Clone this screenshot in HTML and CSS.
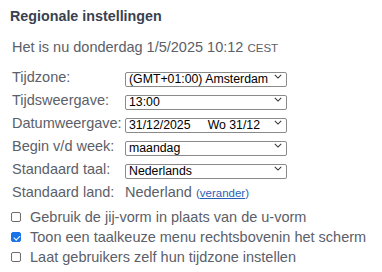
FILE: index.html
```html
<!DOCTYPE html>
<html lang="nl">

<head>
    <meta charset="UTF-8">
    <meta name="viewport" content="width=device-width, initial-scale=1.0">
    <title>Regionale instellingen</title>
    <link rel="stylesheet" href="styles.css">
</head>

<body>
    <div class="settings">
        <h2 class="title">Regionale instellingen</h2>
        <p class="now">Het is nu donderdag 1/5/2025 10:12 <span class="tz">CEST</span></p>

        <div class="row">
            <label class="label" for="timezone">Tijdzone:</label>
            <div class="selectWrap">
                <select id="timezone" class="select">
                    <option>(GMT+01:00) Amsterdam</option>
                </select>
                <svg class="chevron" viewBox="0 0 10 6"><path d="M1 1l4 4 4-4" /></svg>
            </div>
        </div>
        <div class="row">
            <label class="label" for="timeformat">Tijdsweergave:</label>
            <div class="selectWrap">
                <select id="timeformat" class="select">
                    <option>13:00</option>
                </select>
                <svg class="chevron" viewBox="0 0 10 6"><path d="M1 1l4 4 4-4" /></svg>
            </div>
        </div>
        <div class="row">
            <label class="label" for="dateformat">Datumweergave:</label>
            <div class="selectWrap">
                <select id="dateformat" class="select">
                    <option>31/12/2025&nbsp;&nbsp;&nbsp;&nbsp;&nbsp;Wo 31/12</option>
                </select>
                <svg class="chevron" viewBox="0 0 10 6"><path d="M1 1l4 4 4-4" /></svg>
            </div>
        </div>
        <div class="row">
            <label class="label" for="weekstart">Begin v/d week:</label>
            <div class="selectWrap">
                <select id="weekstart" class="select">
                    <option>maandag</option>
                </select>
                <svg class="chevron" viewBox="0 0 10 6"><path d="M1 1l4 4 4-4" /></svg>
            </div>
        </div>
        <div class="row">
            <label class="label" for="language">Standaard taal:</label>
            <div class="selectWrap">
                <select id="language" class="select">
                    <option>Nederlands</option>
                </select>
                <svg class="chevron" viewBox="0 0 10 6"><path d="M1 1l4 4 4-4" /></svg>
            </div>
        </div>
        <div class="row">
            <span class="label">Standaard land:</span>
            <span class="value">Nederland <span class="change">(<a href="#">verander</a>)</span></span>
        </div>

        <div class="checks">
            <label class="check"><input type="checkbox" class="box"> Gebruik de jij-vorm in plaats van de u-vorm</label>
            <label class="check"><input type="checkbox" class="box" checked> Toon een taalkeuze menu rechtsbovenin het scherm</label>
            <label class="check"><input type="checkbox" class="box"> Laat gebruikers zelf hun tijdzone instellen</label>
        </div>
    </div>
</body>

</html>
```

FILE: styles.css
```css
body {
    margin: 0;
    background: #fff;
    font-family: "Liberation Sans", Arial, sans-serif;
    color: #5b6069;
}

.settings {
    padding: 7px 10px;
}

.title {
    margin: 0 0 12px 0;
    font-size: 14.3px;
    line-height: 18px;
    font-weight: bold;
    color: #394150;
}

.now {
    margin: 0 0 7px 2px;
    font-size: 14.5px;
    line-height: 20px;
}

.tz {
    font-size: 11.5px;
}

.row {
    display: flex;
    align-items: center;
    height: 23px;
    padding-left: 2px;
}

.label {
    width: 113px;
    font-size: 14.5px;
}

.selectWrap {
    position: relative;
    width: 162px;
    height: 15px;
}

.select {
    appearance: none;
    -webkit-appearance: none;
    box-sizing: border-box;
    width: 100%;
    height: 15px;
    margin: 0;
    padding: 0 0 0 3px;
    border: 1px solid #8a8a8a;
    border-radius: 2px;
    background: #fff;
    font-family: "Liberation Sans", Arial, sans-serif;
    font-size: 12.3px;
    line-height: 13px;
    color: #000;
}

.chevron {
    position: absolute;
    right: 5px;
    top: 5px;
    width: 8px;
    height: 5px;
    pointer-events: none;
}

.chevron path {
    fill: none;
    stroke: #333;
    stroke-width: 1.3;
}

.value {
    font-size: 14.5px;
}

.change {
    font-size: 11.5px;
    color: #2b5fb4;
}

.change a {
    color: #2b5fb4;
}

.checks {
    margin-top: 4px;
}

.check {
    display: flex;
    align-items: center;
    height: 20px;
    font-size: 14.5px;
}

.box {
    appearance: none;
    -webkit-appearance: none;
    box-sizing: border-box;
    width: 10px;
    height: 10px;
    margin: 0 9px 0 1px;
    border: 1px solid #6d6d6d;
    border-radius: 2px;
    background: #fff;
    position: relative;
}

.box:checked {
    background: #1a73e8;
    border-color: #1a73e8;
}

.box:checked::after {
    content: "";
    position: absolute;
    left: 2.5px;
    top: 0.5px;
    width: 2.5px;
    height: 5px;
    border: solid #fff;
    border-width: 0 1.5px 1.5px 0;
    transform: rotate(45deg);
}
```
